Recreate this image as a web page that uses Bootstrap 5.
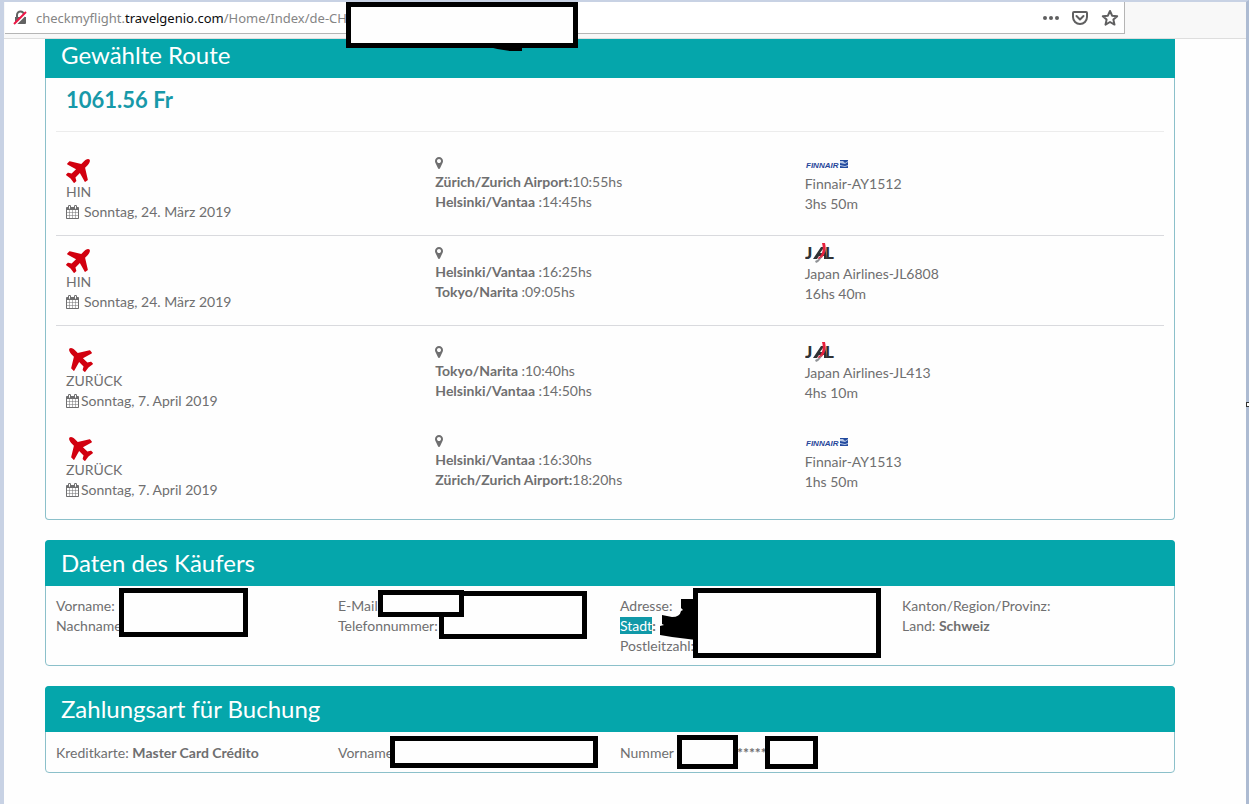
<!DOCTYPE html>
<html lang="de">
<head>
<meta charset="utf-8">
<meta name="viewport" content="width=device-width, initial-scale=1">
<title>Gewählte Route</title>
<link href="https://cdn.jsdelivr.net/npm/bootstrap@5.3.0/dist/css/bootstrap.min.css" rel="stylesheet">
<style>
:root { --teal: #05a6ab; --edge: #8bc0ca; --ink: #6f6f70; }
body { font-family: Lato, "Liberation Sans", sans-serif; font-size: 14px; line-height: 20px; color: var(--ink); background: #fefefe; }
.window-frame { border: solid #c8d2e4; border-width: 2px 3px 0 4px; border-right-color: #adbbd2; min-height: 100vh; }
.toolbar { background: #f8f8f8; border-bottom: 1px solid #dedede; height: 37px; }
.address { width: calc(90% + 2px); margin-left: 1px; height: 32px; border-right: 1px solid #b5b5b5; border-bottom: 1px solid #b5b5b5; padding: 0 5px 0 8px; background: #fff; }
.url { font-family: "Noto Sans", "Open Sans", sans-serif; font-size: 13px; color: #858585; text-decoration: none; margin-left: 8px; }
.url b { color: #0c0c0d; font-weight: 400; }
.tool { border: 0; background: none; padding: 0; display: flex; color: #5f5f60; }
.page { padding: 0 71px 0 41px; }
.panel { --bs-card-border-color: var(--edge); --bs-card-border-radius: 4px; --bs-card-inner-border-radius: 3px; --bs-card-bg: #fefefe; color: inherit; margin-bottom: 20px; }
.panel-head { background: var(--teal); color: #fff; font-size: 24px; line-height: 26px; font-weight: 400; margin: -1px -1px 0; padding: 10px 16px; border-radius: 4px 4px 0 0; }
.panel-top { border-top: 0; border-radius: 0 0 4px 4px; }
.panel-top .panel-head { margin-top: 0; padding: 3px 16px 10px; border-radius: 0; }
.route { padding: 0 10px 6px; }
.price { color: #1799a9; font-size: 22px; line-height: 24px; font-weight: 700; margin: 0 0 14px; padding: 10px 10px 19px; border-bottom: 1px solid #ececec; }
.leg { padding: 6px 0 13px; border-bottom: 1px solid #d9dade; }
.leg-return { border: 0; }
.leg-first-return { margin-top: 9px; }
.leg > div, .cell { padding-left: 10px; padding-right: 10px; }
.plane { display: block; margin: 7px 0 -1px; height: 24px; }
.plane-back { margin-left: 3px; }
.logo { display: block; height: 22px; }
.cal { vertical-align: -2px; margin-right: 5px; }
.leg-return .cal { margin-right: 2px; }
.details { min-height: 79px; padding-top: 10px; }
.payment { min-height: 40px; padding-top: 11px; }
.cell { position: relative; white-space: nowrap; }
.redact { position: absolute; background: #fefefe; border: 5px solid #000; }
.picked { background: #1099a8; color: #fff; }
.r-url { left: 342px; top: 0; width: 232px; height: 46px; z-index: 2; }
.smear { position: absolute; }
.handle { position: absolute; right: 0; top: 402px; width: 3px; height: 5px; border: 1px solid #333; border-right: 0; background: #fff; }
b { font-weight: 700; }
</style>
</head>
<body>
<svg class="d-none" aria-hidden="true">
  <symbol id="plane" viewBox="0 128 1408 1408"><path d="M1376 160q44 52 12 148t-108 172l-161 161 160 696q5 19-12 33l-128 96q-7 6-19 6-4 0-7-1-15-3-21-16l-279-508-259 259 53 194q5 17-8 31l-96 96q-9 9-23 9h-2q-15-2-24-13l-189-252-252-189q-11-7-13-23-1-13 9-25l96-97q9-9 23-9 6 0 8 1l194 53 259-259-508-279q-14-8-17-24-2-16 9-27l128-128q14-13 30-8l665 159 160-160q76-76 172-108t148 12z"/></symbol>
  <symbol id="cal" viewBox="0 0 1664 1792"><path d="M128 1664h288v-288h-288v288zm352 0h320v-288h-320v288zm-352-352h288v-320h-288v320zm352 0h320v-320h-320v320zm-352-384h288v-288h-288v288zm736 736h320v-288h-320v288zm-384-736h320v-288h-320v288zm768 736h288v-288h-288v288zm-384-352h320v-320h-320v320zm-352-864v-288q0-13-9.500-22.500t-22.500-9.500h-64q-13 0-22.500 9.500t-9.500 22.500v288q0 13 9.500 22.500t22.500 9.500h64q13 0 22.500-9.500t9.500-22.500zm736 864h288v-320h-288v320zm-384-384h320v-288h-320v288zm384 0h288v-288h-288v288zm32-480v-288q0-13-9.500-22.500t-22.500-9.500h-64q-13 0-22.500 9.500t-9.500 22.500v288q0 13 9.500 22.500t22.500 9.500h64q13 0 22.500-9.500t9.500-22.500zm384-64v1280q0 52-38 90t-90 38h-1408q-52 0-90-38t-38-90v-1280q0-52 38-90t90-38h128v-96q0-66 47-113t113-47h64q66 0 113 47t47 113v96h384v-96q0-66 47-113t113-47h64q66 0 113 47t47 113v96h128q52 0 90 38t38 90z"/></symbol>
  <symbol id="pin" viewBox="0 0 1024 1536"><path d="M768 512q0-106-75-181t-181-75-181 75-75 181 75 181 181 75 181-75 75-181zm256 0q0 109-33 179l-364 774q-16 33-47.500 52t-67.500 19-67.500-19-46.500-52l-365-774q-33-70-33-179 0-212 150-362t362-150 362 150 150 362z"/></symbol>
  <symbol id="jal" viewBox="0 0 30 22"><text x="0" y="17" font-family="Lato" font-weight="900" font-size="17" fill="#303234">J</text><path d="M8 17 16 5h4l2 12h-3v-3h-5l-2 3zM15 11h3V7z" fill="#303234"/><text x="20" y="17" font-family="Lato" font-weight="900" font-size="17" fill="#303234">L</text><path d="M17 1h3c2 8-1 14-6 17l-1-2c4-3 6-8 4-15z" fill="#e8203d"/><path d="M17 14c-1 3-3 6-6 7l-1-2c3-1 5-3 7-5z" fill="#909396"/></symbol>
  <symbol id="finnair" viewBox="0 0 44 22"><text x="1" y="16" font-family="Liberation Sans" font-weight="700" font-style="italic" font-size="8" fill="#27469a">FINNAIR</text><path d="M35 8h8v8h-8z" fill="#234b9f"/><path d="M35 9h3l2 2 3-2v1l-3 2-5-1zM35 13l5 1 3-1v1l-3 1-5-1z" fill="#b7c7e4"/></symbol>
</svg>
<div class="window-frame position-relative">
  <header class="toolbar position-relative">
    <div class="address d-flex align-items-center">
      <svg width="15" height="16" viewBox="0 0 15 16" aria-hidden="true"><path d="M4 8V5a3.500 3.500 0 0 1 7 0v3" fill="none" stroke="#626262" stroke-width="2"/><path d="M2 7h11v6a1 1 0 0 1-1 1H3a1 1 0 0 1-1-1z" fill="#626262"/><path d="M1 16 14 3" stroke="#fff" stroke-width="2"/><path d="M1 14 13 2" stroke="#ee1746" stroke-width="2"/></svg>
      <a class="url" href="#">checkmyflight.<b>travelgenio.com</b>/Home/Index/de-CH/</a>
      <div class="d-flex ms-auto align-items-center gap-2">
        <button class="tool me-1" type="button" aria-label="Menü"><svg width="16" height="16" viewBox="0 0 16 16" fill="currentColor"><circle cx="2" cy="8" r="2"/><circle cx="8" cy="8" r="2"/><circle cx="14" cy="8" r="2"/></svg></button>
        <button class="tool" type="button" aria-label="Pocket"><svg width="18" height="16" viewBox="0 0 18 16" fill="none" stroke="currentColor" stroke-width="2" stroke-linecap="round" stroke-linejoin="round"><path d="M3 2h12q1 0 1 1v4a7 7 0 0 1-14 0V3q0-1 1-1zM5.500 6 9 9.500 12.500 6"/></svg></button>
        <button class="tool ms-1" type="button" aria-label="Lesezeichen"><svg width="18" height="18" viewBox="0 0 18 18" fill="none" stroke="currentColor" stroke-width="2" stroke-linejoin="round"><path d="m9 2 2.100 4.700 5.100.5-3.800 3.400 1.100 5L9 13l-4.500 2.600 1.100-5-3.800-3.400 5.100-.5z"/></svg></button>
      </div>
    </div>
    <div class="redact r-url"></div>
    <svg class="smear" style="left:485px;top:44px;z-index:2" width="34" height="6" viewBox="0 0 34 6"><path d="M0 0h33v5H22Q10 4 0 1z"/></svg>
  </header>
  <main class="page">
    <section class="card panel panel-top">
      <h2 class="panel-head">Gewählte Route</h2>
      <div class="route">
        <p class="price">1061.56 Fr</p>
        <div class="row g-0 leg">
          <div class="col-4"><svg class="plane" width="24" height="24" fill="#d2000f"><use href="#plane"/></svg>HIN<br><svg class="cal" width="13" height="14" fill="currentColor"><use href="#cal"/></svg>Sonntag, 24. März 2019</div>
          <div class="col-4"><svg width="8" height="12" fill="currentColor"><use href="#pin"/></svg><br><b>Zürich/Zurich Airport:</b>10:55hs<br><b>Helsinki/Vantaa </b>:14:45hs</div>
          <div class="col-4"><svg class="logo" width="44" height="22" role="img" aria-label="Finnair"><use href="#finnair"/></svg>Finnair-AY1512<br>3hs 50m</div>
        </div>
        <div class="row g-0 leg">
          <div class="col-4"><svg class="plane" width="24" height="24" fill="#d2000f"><use href="#plane"/></svg>HIN<br><svg class="cal" width="13" height="14" fill="currentColor"><use href="#cal"/></svg>Sonntag, 24. März 2019</div>
          <div class="col-4"><svg width="8" height="12" fill="currentColor"><use href="#pin"/></svg><br><b>Helsinki/Vantaa </b>:16:25hs<br><b>Tokyo/Narita </b>:09:05hs</div>
          <div class="col-4"><svg class="logo" width="30" height="22" role="img" aria-label="JAL"><use href="#jal"/></svg>Japan Airlines-JL6808<br>16hs 40m</div>
        </div>
        <div class="row g-0 leg leg-return leg-first-return">
          <div class="col-4"><svg class="plane plane-back" width="24" height="24" fill="#d2000f"><use href="#plane" transform="rotate(-90 12 12)"/></svg>ZURÜCK<br><svg class="cal" width="13" height="14" fill="currentColor"><use href="#cal"/></svg>Sonntag, 7. April 2019</div>
          <div class="col-4"><svg width="8" height="12" fill="currentColor"><use href="#pin"/></svg><br><b>Tokyo/Narita </b>:10:40hs<br><b>Helsinki/Vantaa </b>:14:50hs</div>
          <div class="col-4"><svg class="logo" width="30" height="22" role="img" aria-label="JAL"><use href="#jal"/></svg>Japan Airlines-JL413<br>4hs 10m</div>
        </div>
        <div class="row g-0 leg leg-return">
          <div class="col-4"><svg class="plane plane-back" width="24" height="24" fill="#d2000f"><use href="#plane" transform="rotate(-90 12 12)"/></svg>ZURÜCK<br><svg class="cal" width="13" height="14" fill="currentColor"><use href="#cal"/></svg>Sonntag, 7. April 2019</div>
          <div class="col-4"><svg width="8" height="12" fill="currentColor"><use href="#pin"/></svg><br><b>Helsinki/Vantaa </b>:16:30hs<br><b>Zürich/Zurich Airport:</b>18:20hs</div>
          <div class="col-4"><svg class="logo" width="44" height="22" role="img" aria-label="Finnair"><use href="#finnair"/></svg>Finnair-AY1513<br>1hs 50m</div>
        </div>
      </div>
    </section>

    <section class="card panel">
      <h2 class="panel-head">Daten des Käufers</h2>
      <div class="row g-0 details">
        <div class="col-3 cell">Vorname:<br>Nachname<div class="redact" style="left:73px;top:-8px;width:129px;height:49px"></div></div>
        <div class="col-3 cell">E-Mail<br>Telefonnummer:<div class="redact" style="left:111px;top:-5px;width:148px;height:48px"></div><div class="redact" style="left:50px;top:-6px;width:86px;height:27px"></div></div>
        <div class="col-3 cell">Adresse:<br><span class="picked">Stadt</span><b>:</b><br>Postleitzahl:
          <svg class="smear" style="left:50px;top:3px" width="36" height="42" viewBox="0 0 36 42"><path d="M21 0h15v41L12 38 0 36v-9l4-1-2-1V16l10 2q8 0 9-6l2-1-2-2z"/></svg>
          <div class="redact" style="left:83px;top:-8px;width:188px;height:70px"></div></div>
        <div class="col-3 cell">Kanton/Region/Provinz:<br>Land: <b>Schweiz</b></div>
      </div>
    </section>

    <section class="card panel">
      <h2 class="panel-head">Zahlungsart für Buchung</h2>
      <div class="row g-0 payment">
        <div class="col-3 cell">Kreditkarte: <b>Master Card Crédito</b></div>
        <div class="col-3 cell">Vorname<div class="redact" style="left:62px;top:-7px;width:208px;height:32px"></div></div>
        <div class="col-3 cell">Nummer <b class="position-absolute" style="left:127px">*****</b><div class="redact" style="left:67px;top:-8px;width:61px;height:34px"></div><div class="redact" style="left:155px;top:-7px;width:53px;height:33px"></div></div>
      </div>
    </section>
  </main>
</div>
<div class="handle"></div>
</body>
</html>
